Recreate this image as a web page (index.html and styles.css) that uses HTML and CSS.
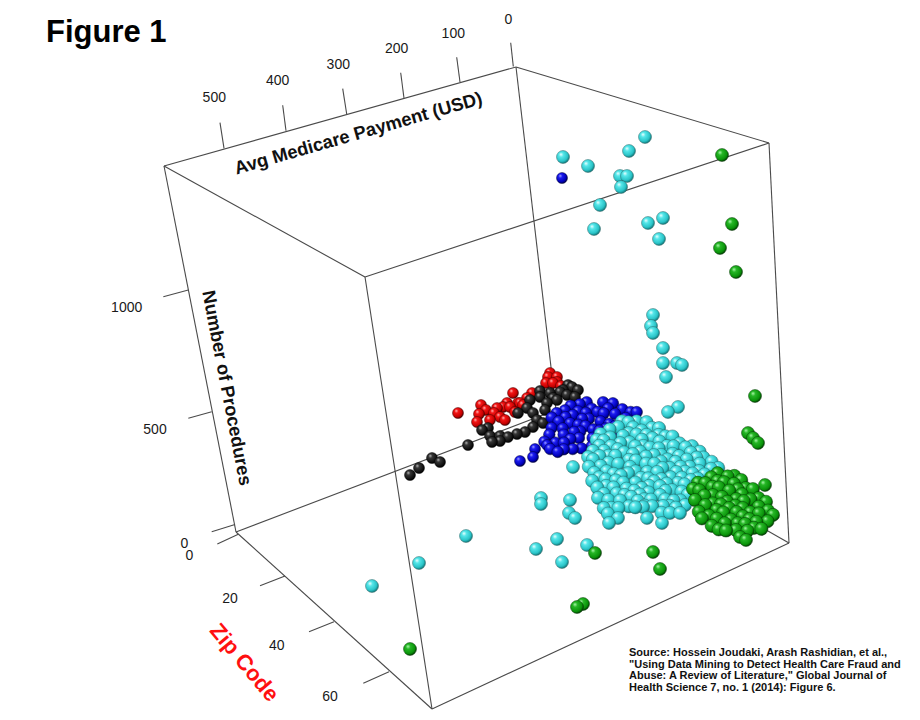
FILE: index.html
```html
<!DOCTYPE html>
<html lang="en">
<head>
<meta charset="utf-8">
<title>Figure 1</title>
<link rel="stylesheet" href="styles.css">
</head>
<body>
<main class="figure">
<svg class="plot" width="920" height="720" viewBox="0 0 920 720" xmlns="http://www.w3.org/2000/svg">
  <defs>
    <radialGradient id="g-cyan" cx="0.4" cy="0.38" r="0.62" fx="0.34" fy="0.3">
      <stop offset="0" stop-color="#e6ffff"/>
      <stop offset="0.3" stop-color="#55e6e9"/>
      <stop offset="0.75" stop-color="#2ac4c8"/>
      <stop offset="1" stop-color="#137a7c"/>
    </radialGradient>
    <radialGradient id="g-blue" cx="0.4" cy="0.38" r="0.62" fx="0.34" fy="0.3">
      <stop offset="0" stop-color="#9a9aff"/>
      <stop offset="0.3" stop-color="#1c1cf0"/>
      <stop offset="0.78" stop-color="#0000b8"/>
      <stop offset="1" stop-color="#000050"/>
    </radialGradient>
    <radialGradient id="g-red" cx="0.4" cy="0.38" r="0.62" fx="0.34" fy="0.3">
      <stop offset="0" stop-color="#ffb0b0"/>
      <stop offset="0.3" stop-color="#f21414"/>
      <stop offset="0.78" stop-color="#c40000"/>
      <stop offset="1" stop-color="#540000"/>
    </radialGradient>
    <radialGradient id="g-black" cx="0.4" cy="0.38" r="0.62" fx="0.34" fy="0.3">
      <stop offset="0" stop-color="#b0b0b0"/>
      <stop offset="0.3" stop-color="#363636"/>
      <stop offset="0.78" stop-color="#121212"/>
      <stop offset="1" stop-color="#000000"/>
    </radialGradient>
    <radialGradient id="g-green" cx="0.4" cy="0.38" r="0.62" fx="0.34" fy="0.3">
      <stop offset="0" stop-color="#a6f5a6"/>
      <stop offset="0.3" stop-color="#26b626"/>
      <stop offset="0.78" stop-color="#0a930a"/>
      <stop offset="1" stop-color="#034403"/>
    </radialGradient>
  </defs>

  <text class="fig-title" x="46" y="42">Figure 1</text>

  <g class="edges">
    <line x1="516" y1="67" x2="164" y2="166"/>
    <line x1="164" y1="166" x2="365" y2="277"/>
    <line x1="365" y1="277" x2="769" y2="143"/>
    <line x1="769" y1="143" x2="516" y2="67"/>
    <line x1="236" y1="532" x2="432" y2="709"/>
    <line x1="432" y1="709" x2="789" y2="543"/>
    <line x1="789" y1="543" x2="556" y2="410"/>
    <line x1="556" y1="410" x2="236" y2="532"/>
    <line x1="164" y1="166" x2="236" y2="532"/>
    <line x1="365" y1="277" x2="432" y2="709"/>
    <line x1="769" y1="143" x2="789" y2="543"/>
    <line x1="516" y1="67" x2="556" y2="410"/>
  </g>

  <g class="ticks">
    <line x1="510.7" y1="42.7" x2="513.3" y2="66.5"/>
    <line x1="456.7" y1="57.3" x2="460" y2="82"/>
    <line x1="400.7" y1="72.7" x2="404" y2="98.3"/>
    <line x1="342.7" y1="88.7" x2="346.7" y2="114"/>
    <line x1="282.7" y1="105.3" x2="286" y2="130.7"/>
    <line x1="220" y1="122.7" x2="224" y2="148.3"/>
    <line x1="163.3" y1="296.7" x2="188.3" y2="290"/>
    <line x1="188.3" y1="418.3" x2="211.7" y2="411.7"/>
    <line x1="211.7" y1="531.7" x2="235" y2="524.5"/>
    <line x1="217.3" y1="544" x2="238.3" y2="534.3"/>
    <line x1="260" y1="585.7" x2="285" y2="576"/>
    <line x1="309" y1="631.7" x2="334" y2="621.7"/>
    <line x1="363.3" y1="683.3" x2="389" y2="671.7"/>
  </g>

  <g class="tick-labels">
    <text x="508.3" y="24.3">0</text>
    <text x="453.3" y="38.3">100</text>
    <text x="396.7" y="53.3">200</text>
    <text x="338.3" y="69">300</text>
    <text x="277.7" y="85">400</text>
    <text x="214.3" y="102.3">500</text>
    <text x="126.7" y="312.3">1000</text>
    <text x="155" y="434.3">500</text>
    <text x="184.3" y="548.3">0</text>
    <text x="189.3" y="560">0</text>
    <text x="230" y="602.7">20</text>
    <text x="276.7" y="650">40</text>
    <text x="330" y="701">60</text>
  </g>

  <text class="axis-title" transform="translate(360 139) rotate(-16)" x="0" y="0">Avg Medicare Payment (USD)</text>
  <text class="axis-title" transform="translate(227 388) rotate(79)" x="0" y="6">Number of Procedures</text>
  <text class="zip-title" transform="translate(245 662) rotate(50)" x="0" y="8">Zip Code</text>

  <g id="balls"></g>

  <text class="source">
    <tspan x="629" y="656">Source: Hossein Joudaki, Arash Rashidian, et al.,</tspan>
    <tspan x="629" y="667.7">"Using Data Mining to Detect Health Care Fraud and</tspan>
    <tspan x="629" y="679.4">Abuse: A Review of Literature," Global Journal of</tspan>
    <tspan x="629" y="691.1">Health Science 7, no. 1 (2014): Figure 6.</tspan>
  </text>
</svg>
</main>
<script src="script.js"></script>
</body>
</html>
```

FILE: styles.css
```css
html, body {
  margin: 0;
  padding: 0;
  background: #ffffff;
}

.figure {
  width: 920px;
  height: 720px;
  overflow: hidden;
}

.plot {
  display: block;
}

.fig-title {
  font-family: "Liberation Sans", Arial, sans-serif;
  font-weight: bold;
  font-size: 31px;
  fill: #000000;
}

.edges line,
.ticks line {
  stroke: #4a4a4a;
  stroke-width: 1.1;
}

.tick-labels text {
  font-family: "Liberation Sans", Arial, sans-serif;
  font-size: 14px;
  fill: #1a1a1a;
  text-anchor: middle;
}

.axis-title {
  font-family: "Liberation Sans", Arial, sans-serif;
  font-weight: bold;
  font-size: 18.4px;
  fill: #111111;
  text-anchor: middle;
}

.zip-title {
  font-family: "Liberation Sans", Arial, sans-serif;
  font-weight: bold;
  font-size: 22px;
  fill: #ff1010;
  text-anchor: middle;
}

.source {
  font-family: "Liberation Sans", Arial, sans-serif;
  font-weight: bold;
  font-size: 11px;
  fill: #111111;
}

.ball {
  stroke-width: 0.6;
  stroke-opacity: 0.75;
}

.ball-cyan { fill: url(#g-cyan); stroke: #2d5e5f; }
.ball-blue { fill: url(#g-blue); stroke: #000033; }
.ball-red { fill: url(#g-red); stroke: #3a0000; }
.ball-black { fill: url(#g-black); stroke: #000000; }
.ball-green { fill: url(#g-green); stroke: #023002; }
```

FILE: script.js
```js
(function () {
  var NS = 'http://www.w3.org/2000/svg';
  var layer = document.getElementById('balls');
  var seed = 20140706;

  function rnd() {
    seed |= 0;
    seed = (seed + 0x6D2B79F5) | 0;
    var t = Math.imul(seed ^ (seed >>> 15), 1 | seed);
    t = (t + Math.imul(t ^ (t >>> 7), 61 | t)) ^ t;
    return ((t ^ (t >>> 14)) >>> 0) / 4294967296;
  }

  function inPoly(x, y, p) {
    var c = false;
    for (var i = 0, j = p.length - 1; i < p.length; j = i++) {
      var xi = p[i][0], yi = p[i][1], xj = p[j][0], yj = p[j][1];
      if (((yi > y) !== (yj > y)) && (x < (xj - xi) * (y - yi) / (yj - yi) + xi)) c = !c;
    }
    return c;
  }

  var balls = [];

  function add(list, color, r, bias) {
    list.forEach(function (p) {
      balls.push({ x: p[0], y: p[1], c: color, r: r, k: p[1] + bias });
    });
  }

  function fill(poly, n, color, r, md, bias) {
    var xs = poly.map(function (p) { return p[0]; });
    var ys = poly.map(function (p) { return p[1]; });
    var x0 = Math.min.apply(null, xs), x1 = Math.max.apply(null, xs);
    var y0 = Math.min.apply(null, ys), y1 = Math.max.apply(null, ys);
    var pts = [], tries = 0;
    while (pts.length < n && tries < 40000) {
      tries++;
      var x = x0 + rnd() * (x1 - x0), y = y0 + rnd() * (y1 - y0);
      if (!inPoly(x, y, poly)) continue;
      var ok = true;
      for (var i = 0; i < pts.length; i++) {
        var dx = pts[i][0] - x, dy = pts[i][1] - y;
        if (dx * dx + dy * dy < md * md) { ok = false; break; }
      }
      if (ok) pts.push([x, y]);
    }
    add(pts, color, r, bias);
  }

  // red cluster
  add([[458,413],[481,405],[479,414],[477,422],[494,413],[497,408],[500,417],[505,420],
       [503,407],[510,407],[513,393],[518,403],[523,405],[532,393],[507,403],[520,403],
       [546,383],[548,377],[553,383],[550,373],[557,377],[557,382],[561,386],[490,420],
       [486,410],[527,398],[515,412]], 'red', 5.5, 0);

  // black cluster
  add([[410,475],[419,468],[432,458],[440,462],[468,445],[482,430],[488,428],[492,442],
       [490,436],[500,436],[508,437],[517,434],[525,432],[533,427],[537,420],[533,413],
       [518,413],[530,400],[540,397],[550,393],[563,390],[572,387],[547,403],[557,400],
       [567,395],[575,397],[543,423],[540,391],[553,398],[545,410],[527,408],[500,441],
       [560,392],[568,385],[578,390]], 'black', 5.5, 10);

  // blue
  add([[520,461],[533,457],[535,449],[547,445],[562,178]], 'blue', 5.5, 20);
  fill([[548,418],[568,405],[600,398],[620,406],[638,412],[618,428],[612,445],[600,448],
        [580,452],[560,455],[545,447],[540,430]], 55, 'blue', 5.8, 6, 20);

  // cyan
  add([[563,157],[588,166],[629,151],[645,137],[620,176],[627,176],[621,187],[600,205],
       [594,229],[648,223],[663,218],[659,239],
       [653,315],[651,326],[653,333],[663,348],[663,363],[677,363],[682,365],[666,377],
       [678,407],[668,412],
       [541,498],[541,504],[570,500],[569,513],[575,518],[609,523],[618,518],[647,518],
       [662,523],[466,536],[557,539],[536,549],[587,545],[562,562],[419,563],[372,586],
       [573,467],[588,457],[643,507],[680,513]], 'cyan', 6.5, 30);
  fill([[588,455],[600,432],[615,422],[635,417],[660,428],[685,440],[705,455],[722,468],
        [702,480],[692,490],[686,505],[666,515],[645,511],[625,511],[608,514],[598,500],
        [590,486]], 150, 'cyan', 6.6, 6.4, 30);

  // green
  add([[722,155],[732,224],[720,248],[736,272],[755,396],[748,433],[753,438],[758,443],
       [765,485],[595,553],[653,552],[660,569],[577,607],[583,604],[410,649],[740,537],
       [746,540]], 'green', 6.5, 40);
  fill([[692,488],[705,475],[722,470],[740,478],[756,490],[768,503],[775,518],[766,529],
        [742,533],[715,529],[698,516]], 62, 'green', 6.6, 6.4, 40);

  balls.sort(function (a, b) { return a.k - b.k; });

  balls.forEach(function (b) {
    var c = document.createElementNS(NS, 'circle');
    c.setAttribute('cx', b.x.toFixed(1));
    c.setAttribute('cy', b.y.toFixed(1));
    c.setAttribute('r', b.r);
    c.setAttribute('class', 'ball ball-' + b.c);
    layer.appendChild(c);
  });
})();
```
